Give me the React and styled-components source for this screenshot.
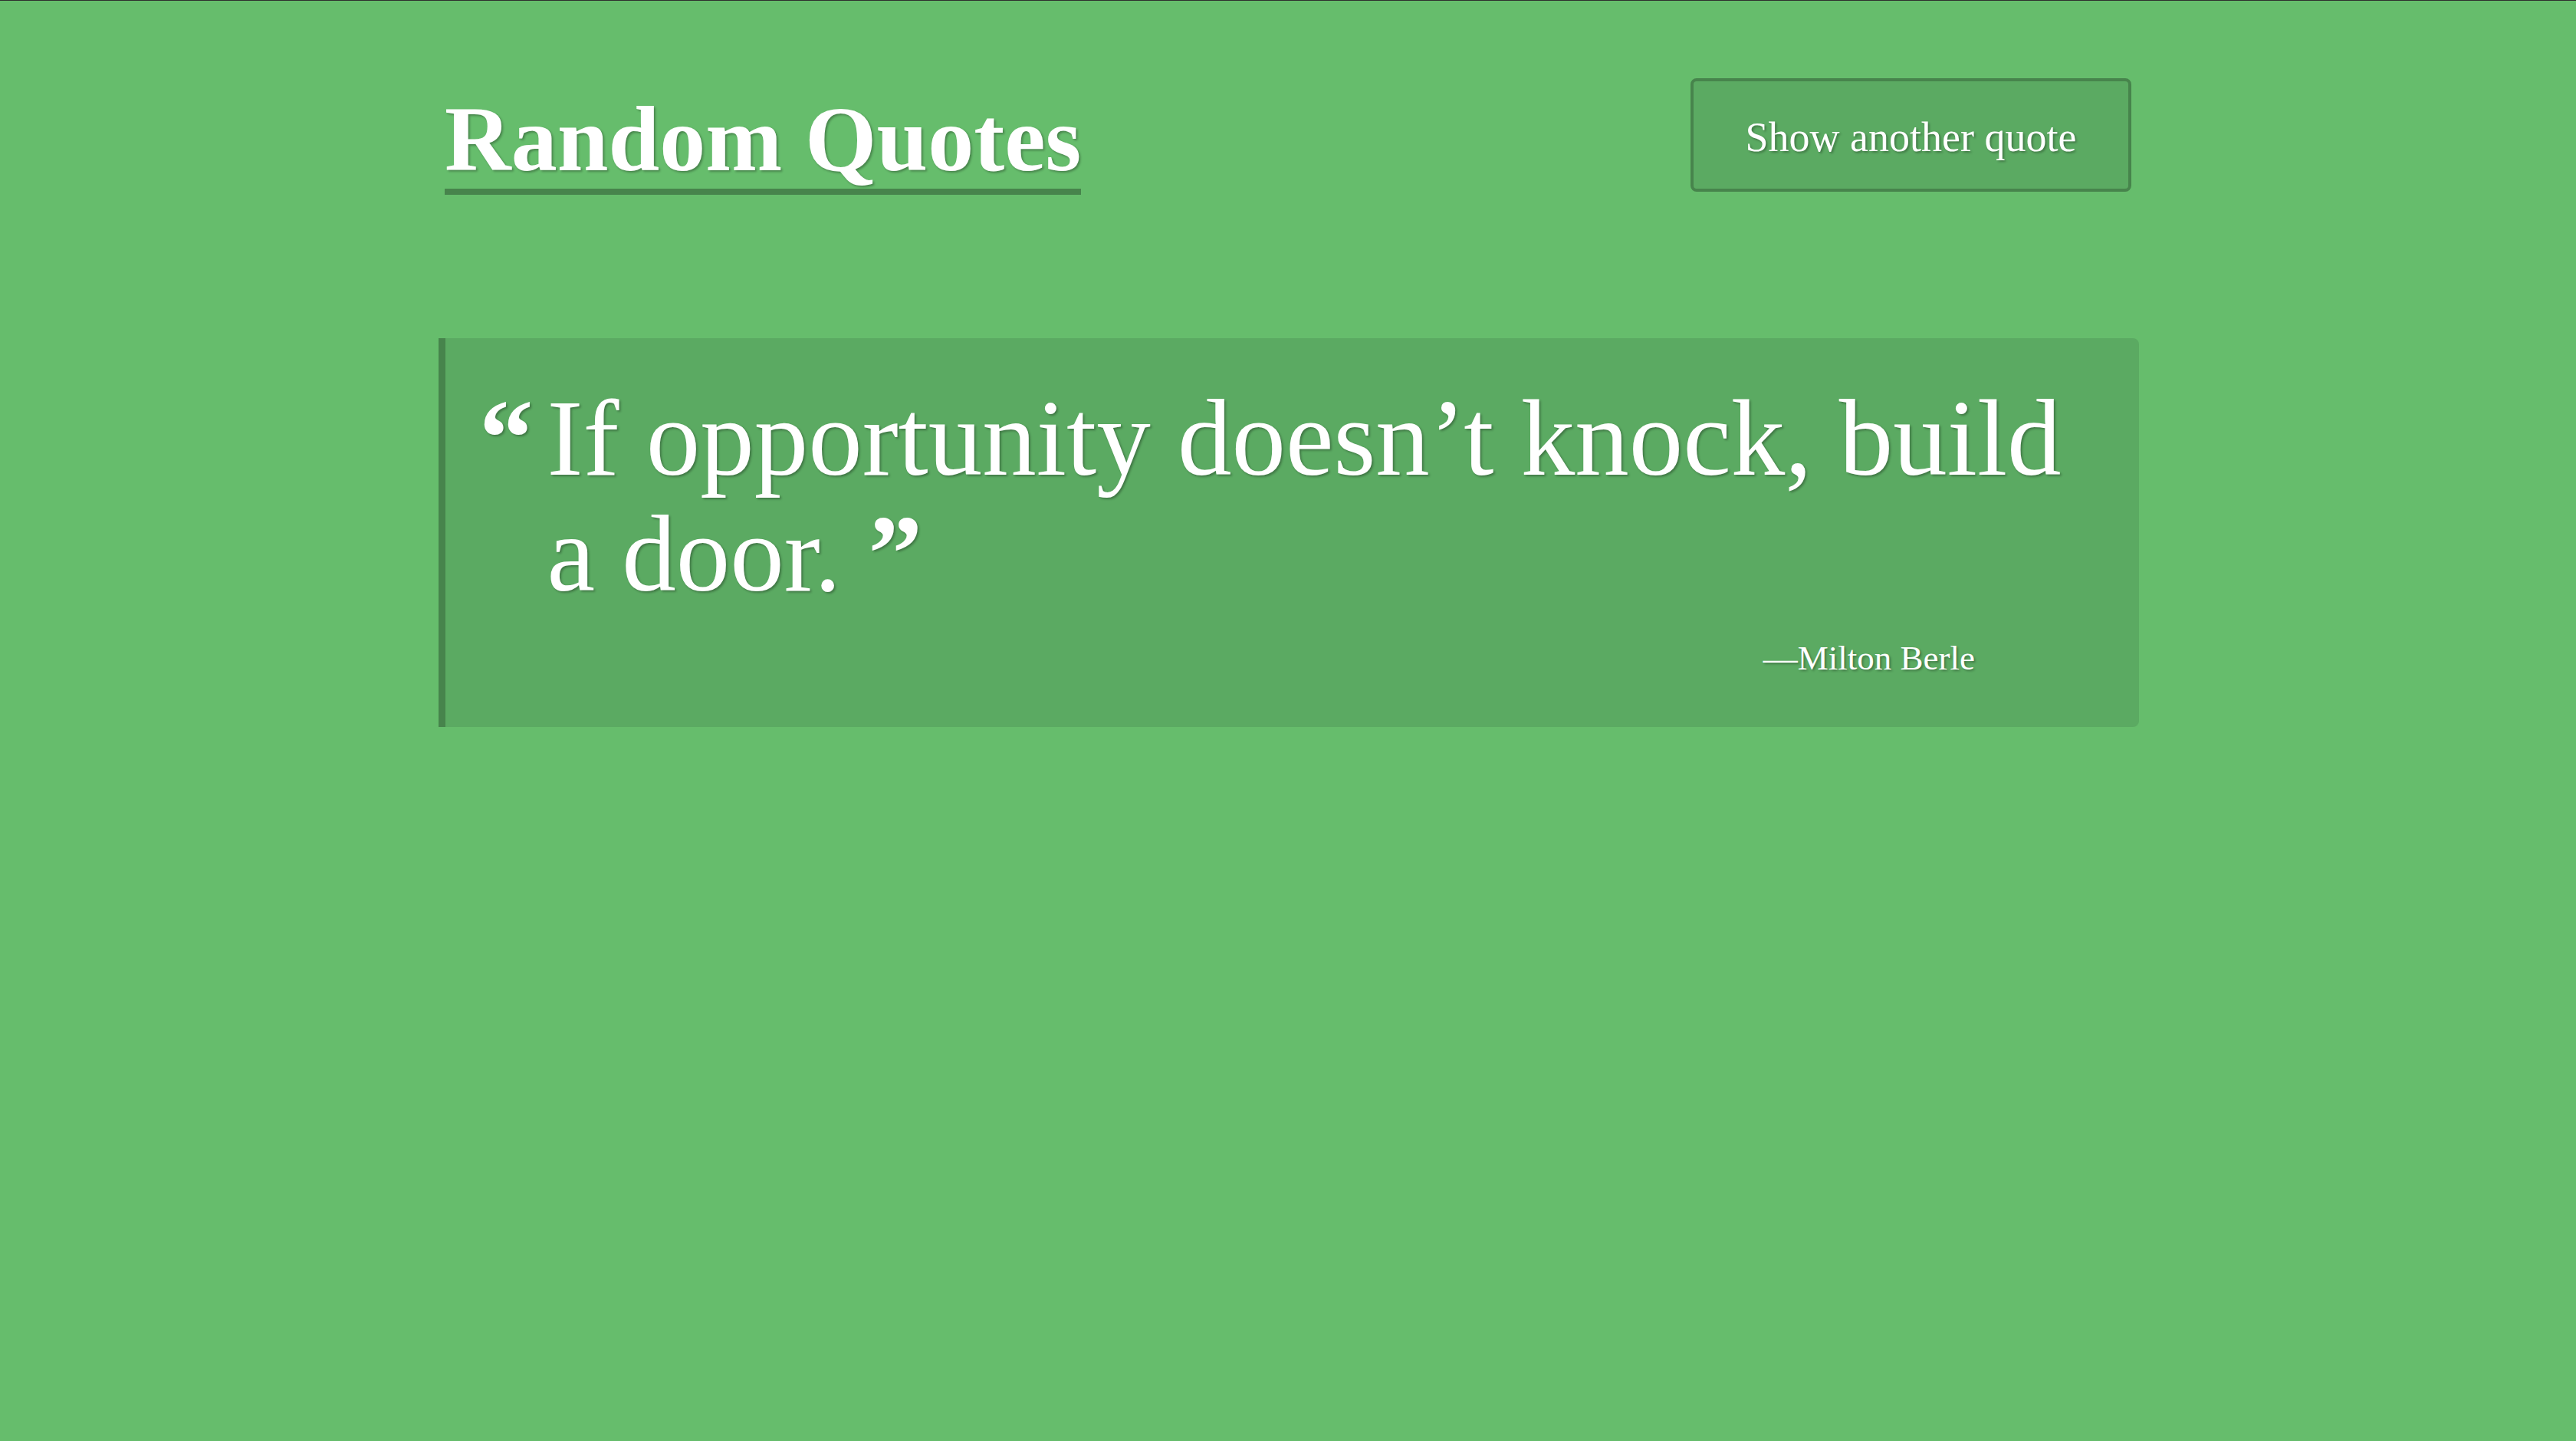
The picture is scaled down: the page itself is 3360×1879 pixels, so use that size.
import React from "react";
import styled, { createGlobalStyle } from "styled-components";

const GlobalStyle = createGlobalStyle`
  html, body {
    margin: 0;
    padding: 0;
    background: #66bd6c;
  }
  body {
    border-top: 1px solid #2e2e2e;
    font-family: "Liberation Serif", "Times New Roman", serif;
    color: #ffffff;
    min-height: 1878px;
  }
`;

const Page = styled.div`
  width: 2200px;
  margin: 0 auto;
  padding-top: 101px;
  text-shadow: 2px 2px 3px rgba(0, 0, 0, 0.3);
`;

const Header = styled.header`
  display: flex;
  justify-content: space-between;
  align-items: flex-start;
`;

const Title = styled.h1`
  margin: 16px 0 0;
  font-size: 120px;
  line-height: 128px;
  font-weight: 700;
  border-bottom: 8px solid #47844c;
`;

const Button = styled.button`
  box-sizing: border-box;
  width: 575px;
  height: 148px;
  padding: 6px 0 0;
  background: #5baa62;
  border: 4px solid #47844c;
  border-radius: 8px;
  color: #ffffff;
  font-family: "Liberation Serif", "Times New Roman", serif;
  font-size: 54px;
  line-height: 62px;
  text-shadow: 2px 2px 3px rgba(0, 0, 0, 0.3);
  cursor: pointer;
`;

const Blockquote = styled.blockquote`
  display: flex;
  align-items: flex-start;
  margin: 187px -10px 0 -8px;
  padding: 55px 44px 63px 44px;
  background: #5baa62;
  border-left: 9px solid #47844c;
  border-radius: 0 8px 8px 0;
`;

const Mark = styled.span`
  flex: none;
  font-weight: 700;
  font-size: 141px;
  line-height: 151px;
  margin-right: ${(p) => (p.$open ? "18px" : "0")};
`;

const Body = styled.div`
  flex: 1;
  display: flex;
  flex-direction: column;
`;

const Text = styled.p`
  margin: 0;
  font-size: 141px;
  line-height: 151px;
`;

const Author = styled.cite`
  align-self: flex-end;
  margin: 33px 170px 0 0;
  font-style: normal;
  font-size: 45px;
  line-height: 54px;
`;

export default function App() {
  return (
    <>
      <GlobalStyle />
      <Page>
        <Header>
          <Title>Random Quotes</Title>
          <Button>Show another quote</Button>
        </Header>
        <Blockquote>
          <Mark $open>“</Mark>
          <Body>
            <Text>
              If opportunity doesn’t knock, build a door.{" "}
              <Mark>”</Mark>
            </Text>
            <Author>—Milton Berle</Author>
          </Body>
        </Blockquote>
      </Page>
    </>
  );
}
